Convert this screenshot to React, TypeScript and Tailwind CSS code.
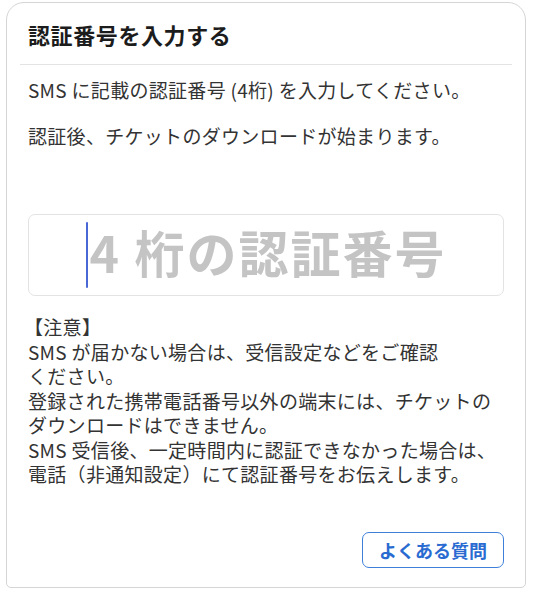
import React from 'react';

const notes = [
  '【注意】',
  'SMS が届かない場合は、受信設定などをご確認',
  'ください。',
  '登録された携帯電話番号以外の端末には、チケットの',
  'ダウンロードはできません。',
  'SMS 受信後、一定時間内に認証できなかった場合は、',
  '電話（非通知設定）にて認証番号をお伝えします。',
];

const App = () => {
  return (
    <div className="min-h-[600px] w-[533px] bg-white pt-[2px] pl-[6px] font-['Noto_Sans_CJK_JP',sans-serif]">
      {/* Card */}
      <div className="flex h-[586px] w-[520px] flex-col rounded-t-[18px] rounded-b-[5px] border border-[#d5d5d5] bg-white px-[13px] pt-[16px]">
        <h1 className="pl-[8px] text-[22px] font-bold leading-[30px] tracking-[0.6px] text-[#1c1c1c]">
          認証番号を入力する
        </h1>
        <div className="mt-[15px] h-px bg-[#e3e3e3]" />

        <div className="mt-[13px] pl-[8px] text-[19px] leading-[24px] tracking-[0.3px] text-[#333]">
          <p>SMS に記載の認証番号 (4桁) を入力してください。</p>
          <p className="mt-[22px]">認証後、チケットのダウンロードが始まります。</p>
        </div>

        {/* Code input */}
        <div className="mt-[66px] ml-[8px] mr-[8px] flex h-[82px] items-center justify-center rounded-[7px] border border-[#e3e3e3]">
          <div className="flex items-center">
            <div className="mr-[2px] h-[66px] w-[2px] rounded-full bg-[#4a67d6]" />
            <span className="mb-[8px] text-[50px] font-bold leading-none tracking-[2px] text-[#c4c4c4]">
              4 桁の認証番号
            </span>
          </div>
        </div>

        {/* Notes */}
        <div className="mt-[19px] pl-[8px] text-[19px] leading-[24.5px] tracking-[0.3px] text-[#333]">
          {notes.map((line, i) => (
            <p key={i} className={i === 0 ? '-ml-[4px]' : ''}>{line}</p>
          ))}
        </div>

        <div className="mt-auto mb-[19px] flex justify-end pr-[8px]">
          <button className="h-[36px] w-[142px] rounded-[7px] border border-[#3d7fd9] text-[18px] font-bold text-[#2a6bd1]">
            よくある質問
          </button>
        </div>
      </div>
    </div>
  );
};

export default App;
